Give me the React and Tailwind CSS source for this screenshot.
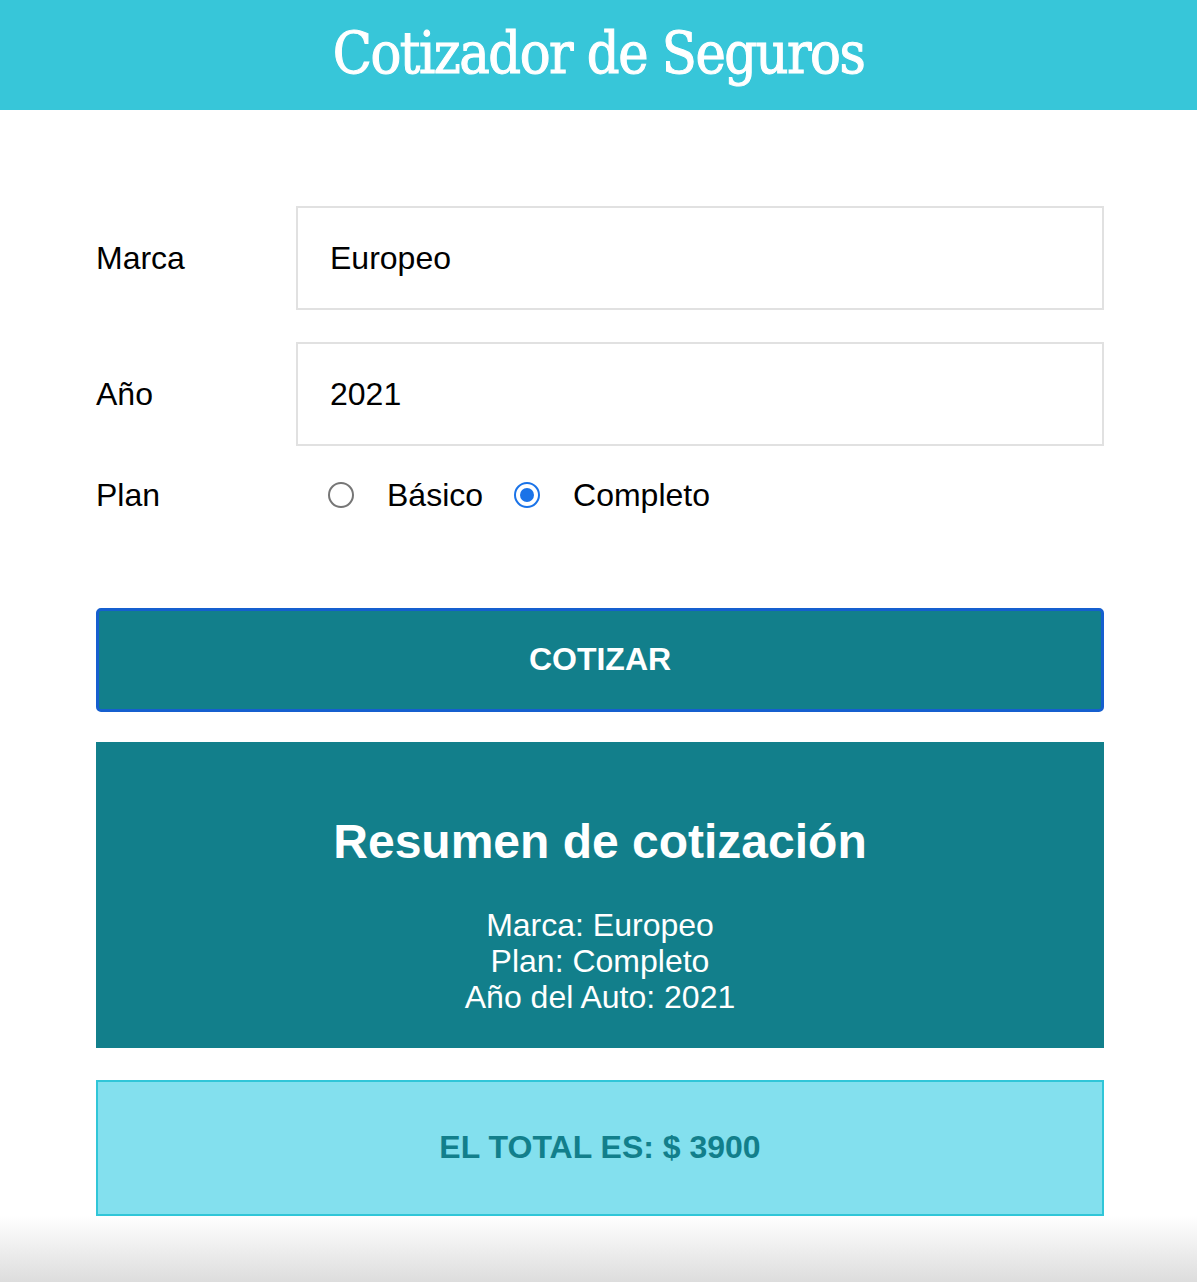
import { useState } from "react";

const Radio = ({ checked, onClick }) => (
    <span
        onClick={onClick}
        className={`flex h-[26px] w-[26px] shrink-0 items-center justify-center rounded-full border-2 ${
            checked ? "border-[#1a73e8]" : "border-[#767676]"
        }`}
    >
        {checked && <span className="h-[14px] w-[14px] rounded-full bg-[#1a73e8]" />}
    </span>
);

const App = () => {
    const [plan, setPlan] = useState("completo");

    return (
        <div className="min-h-[1282px] bg-white font-['Liberation_Sans',Arial,sans-serif] text-black flex flex-col">
            {/* Header */}
            <header className="h-[110px] bg-[#37c6d9] flex items-center justify-center">
                <h1 className="font-['DejaVu_Serif',serif] text-[57px] leading-none text-white tracking-[-1.5px] [font-stretch:condensed] [-webkit-text-stroke:1px_white] pb-1">
                    Cotizador de Seguros
                </h1>
            </header>

            <main className="w-[1008px] ml-[96px] pt-[96px]">
                {/* Form */}
                <div className="flex items-center">
                    <label className="w-[200px] text-[32px]">Marca</label>
                    <div className="flex-1 h-[104px] border-2 border-[#e1e1e1] flex items-center px-[32px] text-[32px]">
                        Europeo
                    </div>
                </div>

                <div className="flex items-center mt-[32px]">
                    <label className="w-[200px] text-[32px]">Año</label>
                    <div className="flex-1 h-[104px] border-2 border-[#e1e1e1] flex items-center px-[32px] text-[32px]">
                        2021
                    </div>
                </div>

                <div className="flex items-center mt-[32px] h-[34px]">
                    <label className="w-[200px] text-[32px]">Plan</label>
                    <div className="flex items-center text-[32px] pl-[32px]">
                        <Radio checked={plan === "basico"} onClick={() => setPlan("basico")} />
                        <span className="ml-[33px] mr-[31px]">Básico</span>
                        <Radio checked={plan === "completo"} onClick={() => setPlan("completo")} />
                        <span className="ml-[33px]">Completo</span>
                    </div>
                </div>

                <button className="mt-[96px] w-full h-[104px] bg-[#127f8b] border-[3px] border-[#155fcf] rounded-[5px] text-white font-bold text-[32px] uppercase pb-[3px]">
                    Cotizar
                </button>

                {/* Resumen */}
                <div className="mt-[30px] h-[306px] bg-[#127f8b] text-white text-center flex flex-col items-center pt-[76px]">
                    <h2 className="text-[48px] font-bold leading-none">Resumen de cotización</h2>
                    <div className="mt-[41px] text-[32px] leading-[36px]">
                        <p>Marca: Europeo</p>
                        <p>Plan: Completo</p>
                        <p>Año del Auto: 2021</p>
                    </div>
                </div>

                {/* Total */}
                <div className="mt-[32px] h-[136px] bg-[#83e0ee] border-2 border-[#30c6d8] flex items-center justify-center pb-[2px]">
                    <p className="text-[#127f8b] font-bold text-[32px] uppercase">El total es: $ 3900</p>
                </div>
            </main>

            <div className="mt-auto h-[66px] bg-gradient-to-b from-white to-[#dddddd]" />
        </div>
    );
};

export default App;
